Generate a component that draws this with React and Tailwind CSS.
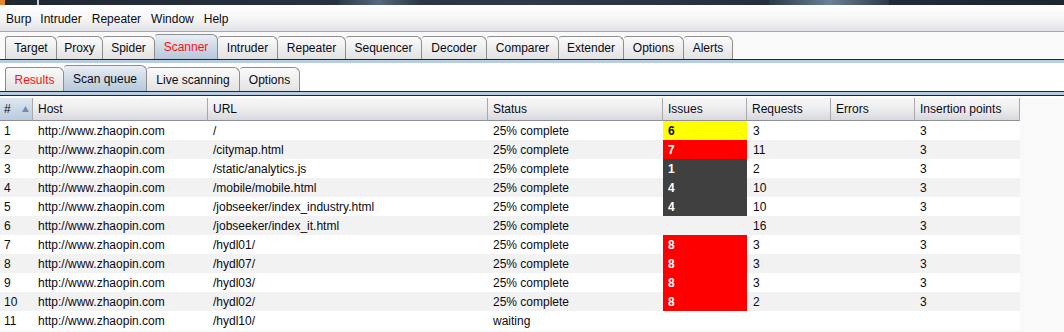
import React from "react";

const mainTabs = [
  ["Target", 52],
  ["Proxy", 46],
  ["Spider", 52],
  ["Scanner", 63, true, true],
  ["Intruder", 60],
  ["Repeater", 68],
  ["Sequencer", 76],
  ["Decoder", 65],
  ["Comparer", 72],
  ["Extender", 65],
  ["Options", 60],
  ["Alerts", 49],
];

const subTabs = [
  ["Results", 59, false, true],
  ["Scan queue", 83, true, false],
  ["Live scanning", 93],
  ["Options", 60],
];

const cols = [
  ["#", 33],
  ["Host", 175],
  ["URL", 280],
  ["Status", 175],
  ["Issues", 84],
  ["Requests", 84],
  ["Errors", 84],
  ["Insertion points", 105],
];

const rows = [
  ["1", "/", "25% complete", "6", "y", "3"],
  ["2", "/citymap.html", "25% complete", "7", "r", "11"],
  ["3", "/static/analytics.js", "25% complete", "1", "d", "2"],
  ["4", "/mobile/mobile.html", "25% complete", "4", "d", "10"],
  ["5", "/jobseeker/index_industry.html", "25% complete", "4", "d", "10"],
  ["6", "/jobseeker/index_it.html", "25% complete", "", "", "16"],
  ["7", "/hydl01/", "25% complete", "8", "r", "3"],
  ["8", "/hydl07/", "25% complete", "8", "r", "3"],
  ["9", "/hydl03/", "25% complete", "8", "r", "3"],
  ["10", "/hydl02/", "25% complete", "8", "r", "2"],
  ["11", "/hydl10/", "waiting", "", "", ""],
];

function Tab({ label, w, selected, red, first, big }) {
  return (
    <div
      style={{ width: w }}
      className={
        "flex items-center justify-center shrink-0 border border-b-0 border-[#8d8d8d] rounded-tl-[3px] rounded-tr-[6px] " +
        (first ? "" : "border-l-0 ") +
        (selected
          ? (big ? "h-[25px] " : "h-[26px] ") + "bg-linear-to-b from-[#e8eef4] to-[#b5c7da]"
          : (big ? "h-[23px] " : "h-[24px] ") + "bg-linear-to-b from-[#fbfbfb] to-[#e2e2e2]") +
        (red ? " text-[#ff1010]" : " text-[#0a0a14]")
      }
    >
      {label}
    </div>
  );
}

export default function App() {
  return (
    <div className="w-[1064px] h-[332px] overflow-hidden bg-white font-['Liberation_Sans',Arial,sans-serif] text-[12px] text-[#0a0a14]">
      {/* title strip */}
      <div className="h-[5px] flex bg-linear-to-r from-[#1f2833] via-[#2e3a48] to-[#1d2530]">
        <div className="w-[5px] h-[5px] bg-[#e8872a]" />
        <div className="w-[32px]" />
        <div className="w-[2px] bg-[#c8ced6]" />
        <div className="w-[300px]" />
        <div className="w-[80px] bg-linear-to-r from-[#2e3a48] via-[#56697f] to-[#2e3a48]" />
        <div className="w-[350px]" />
        <div className="w-[120px] bg-linear-to-r from-[#2e3a48] via-[#6b8199] to-[#2e3a48]" />
      </div>
      {/* menu bar */}
      <div className="h-[27px] flex items-center gap-[10px] pl-[6px] pt-px border-b border-[#a8a8a8] bg-linear-to-b from-[#ffffff] via-[#f6f6f7] to-[#e2e3e6]">
        <span>Burp</span>
        <span className="-ml-px">Intruder</span>
        <span>Repeater</span>
        <span>Window</span>
        <span>Help</span>
      </div>
      {/* main tabs */}
      <div className="h-[27px] flex items-end pl-[5px] bg-[#f9f9f9]">
        {mainTabs.map(([l, w, sel, red], i) => (
          <Tab key={l} label={l} w={w} selected={sel} red={red} first={i === 0} big />
        ))}
      </div>
      <div className="h-px bg-[#1c2638]" />
      <div className="h-[3px] bg-[#b8cde3]" />
      {/* sub tabs */}
      <div className="h-[28px] flex items-end pl-[5px] bg-white">
        {subTabs.map(([l, w, sel, red], i) => (
          <Tab key={l} label={l} w={w} selected={sel} red={red} first={i === 0} />
        ))}
      </div>
      <div className="h-px bg-[#1c2638]" />
      <div className="h-[3px] bg-[#b8cde3]" />
      <div className="h-px bg-[#1c2638]" />
      <div className="h-[2px] bg-white" />
      {/* table */}
      <div className="bg-[#f9f9f9] h-[300px]">
        <div className="flex h-[23px]">
          {cols.map(([l, w], i) => (
            <div
              key={l}
              style={{ width: w }}
              className={
                "shrink-0 flex items-center border-r border-b border-r-[#a9a9ad] border-b-[#8f9095] " +
                (i === 0
                  ? "pl-[4px] bg-linear-to-b from-[#dde7f1] to-[#b9cbdd]"
                  : "pl-[5px] bg-linear-to-b from-[#f7f7f8] via-[#ededef] to-[#d8d9de]")
              }
            >
              <span>{l}</span>
              {i === 0 && (
                <svg width="7" height="6" viewBox="0 0 7 6" className="ml-[11px]">
                  <polygon points="3.5,0 7,6 0,6" fill="#6d8fb4" />
                </svg>
              )}
            </div>
          ))}
        </div>
        {rows.map((r, idx) => {
          const bg = idx % 2 === 1 ? "bg-[#f2f2f2]" : "bg-white";
          const issueBg =
            r[4] === "y"
              ? "bg-[#ffff00] text-[#0a0a14]"
              : r[4] === "r"
              ? "bg-[#ff0000] text-white"
              : r[4] === "d"
              ? "bg-[#404040] text-white"
              : "";
          const cell = "h-[19px] pt-px leading-[19px] overflow-hidden ";
          return (
            <div key={r[0]} className={"flex h-[19px] w-[1020px] " + bg}>
              <div className={cell + "w-[33px] pl-[4px]"}>{r[0]}</div>
              <div className={cell + "w-[175px] pl-[5px]"}>http://www.zhaopin.com</div>
              <div className={cell + "w-[280px] pl-[5px]"}>{r[1]}</div>
              <div className={cell + "w-[175px] pl-[5px]"}>{r[2]}</div>
              <div className={cell + "w-[84px] pl-[5px] font-bold " + issueBg}>{r[3]}</div>
              <div className={cell + "w-[84px] pl-[6px]"}>{r[5]}</div>
              <div className={cell + "w-[84px] pl-[5px]"}></div>
              <div className={cell + "w-[105px] pl-[5px]"}>{r[2] === "waiting" ? "" : "3"}</div>
            </div>
          );
        })}
      </div>
    </div>
  );
}
